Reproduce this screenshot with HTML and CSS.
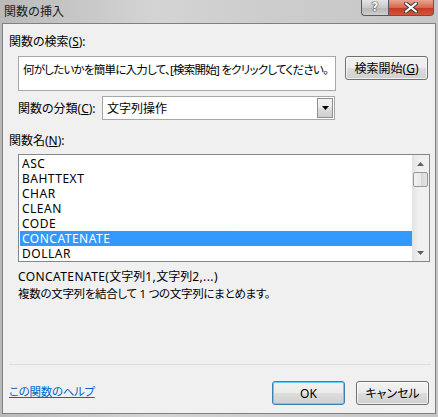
FILE: index.html
```html
<!DOCTYPE html>
<html lang="ja">
<head>
<meta charset="utf-8">
<title>関数の挿入</title>
<link rel="stylesheet" href="styles.css">
</head>
<body>
<div class="window">
  <div class="titlebar">
    <span class="title">関数の挿入</span>
    <div class="caption">
      <div class="cap-btn help">?</div>
      <div class="cap-btn close">
        <svg width="14" height="11" viewBox="0 0 14 11"><path d="M2 1.5 L12 9.5 M12 1.5 L2 9.5" stroke="#3a3a3a" stroke-width="4" stroke-linecap="square"/><path d="M2 1.5 L12 9.5 M12 1.5 L2 9.5" stroke="#fff" stroke-width="2" stroke-linecap="square"/></svg>
      </div>
    </div>
  </div>
  <div class="client">
    <div class="label">関数の検索(<u>S</u>):</div>
    <div class="search-row">
      <div class="search-box">何がしたいかを簡単に入力して、[検索開始] をクリックしてください。</div>
      <div class="btn search-btn">検索開始(<u>G</u>)</div>
    </div>
    <div class="cat-row">
      <span class="cat-label">関数の分類(<u>C</u>):</span>
      <div class="combo">
        <span class="combo-text">文字列操作</span>
        <div class="combo-btn"><svg width="7" height="4" viewBox="0 0 7 4"><path d="M0 0 H7 L3.5 4 Z" fill="#000"/></svg></div>
      </div>
    </div>
    <div class="label name-label">関数名(<u>N</u>):</div>
    <div class="listbox">
      <div class="items">
        <div class="item">ASC</div>
        <div class="item">BAHTTEXT</div>
        <div class="item">CHAR</div>
        <div class="item">CLEAN</div>
        <div class="item">CODE</div>
        <div class="item selected">CONCATENATE</div>
        <div class="item">DOLLAR</div>
      </div>
      <div class="scrollbar">
        <div class="arrow"><svg width="7" height="4" viewBox="0 0 7 4"><path d="M3.5 0 L7 4 H0 Z" fill="#606060"/></svg></div>
        <div class="thumb"></div>
        <div class="track"></div>
        <div class="arrow"><svg width="7" height="4" viewBox="0 0 7 4"><path d="M0 0 H7 L3.5 4 Z" fill="#606060"/></svg></div>
      </div>
    </div>
    <div class="syntax">CONCATENATE(<span class="cjk">文字列</span>1,<span class="cjk">文字列</span>2,...)</div>
    <div class="desc">複数の文字列を結合して 1 つの文字列にまとめます。</div>
    <div class="spacer"></div>
    <div class="separator"></div>
    <div class="footer">
      <a class="help-link" href="#">この関数のヘルプ</a>
      <div class="buttons">
        <div class="btn ok">OK</div>
        <div class="btn">キャンセル</div>
      </div>
    </div>
  </div>
</div>
</body>
</html>
```
FILE: styles.css
```css
html, body {
  margin: 0;
  padding: 0;
}
body {
  width: 438px;
  height: 417px;
  overflow: hidden;
  font-family: "Noto Sans", "Noto Sans CJK JP", sans-serif;
  font-feature-settings: "palt";
  font-size: 12px;
  color: #000;
}
.window {
  width: 438px;
  height: 417px;
  box-sizing: border-box;
  display: flex;
  flex-direction: column;
  padding: 0 2px 3px 2px;
  background: linear-gradient(to right, #b9b9b9 0%, #d4d4d4 35%, #cdcdcd 60%, #c6c6c6 100%);
}
.titlebar {
  height: 23px;
  flex: none;
  display: flex;
  align-items: flex-start;
}
.title {
  margin-left: 2px;
  margin-top: 3px;
  line-height: 17px;
  font-size: 12px;
  color: #1a1a1a;
  font-feature-settings: normal;
}
.caption {
  margin-left: auto;
  margin-right: 2px;
  display: flex;
  height: 16px;
}
.cap-btn {
  height: 15px;
  border: 1px solid #595959;
  border-top: none;
  display: flex;
  align-items: center;
  justify-content: center;
  box-sizing: content-box;
}
.help {
  width: 26px;
  border-radius: 0 0 0 4px;
  border-right: none;
  background: linear-gradient(#e4e4e4, #c9c9c9 50%, #b6b6b6 51%, #cfcfcf);
  font-family: "DejaVu Sans", sans-serif;
  font-weight: bold;
  font-size: 12px;
  color: #fff;
  text-shadow: 0 0 1px #333, 0 0 1px #333, 0 0 1px #333;
  line-height: 15px;
}
.close {
  width: 44px;
  border-radius: 0 0 4px 0;
  background: linear-gradient(#e8a593, #d5694f 50%, #c4391f 51%, #d2553a);
}
.client {
  flex: 1;
  background: #f0f0f0;
  border: 1px solid #808080;
  display: flex;
  flex-direction: column;
  padding: 10px 4px 8px 6px;
}
.label {
  line-height: 15px;
  height: 15px;
}
.search-row {
  display: flex;
  align-items: flex-start;
  margin-top: 7px;
  margin-left: 9px;
}
.search-box {
  background: #fff;
  border: 1px solid #a7a7a7;
  padding: 4px 0 0 4px;
  box-sizing: border-box;
  width: 318px;
  height: 35px;
  line-height: 17px;
  white-space: nowrap;
  overflow: hidden;
  font-size: 11.5px;
  letter-spacing: -0.75px;
}
.btn {
  width: 73px;
  height: 23px;
  box-sizing: border-box;
  border: 1px solid #707070;
  border-radius: 3px;
  background: linear-gradient(#f2f2f2, #ebebeb 50%, #dddddd 51%, #cfcfcf);
  box-shadow: inset 0 0 0 1px rgba(255,255,255,0.7);
  display: flex;
  align-items: center;
  justify-content: center;
  line-height: 15px;
}
.search-btn {
  width: 83px;
  height: 24px;
  margin-left: 9px;
}
.cat-row {
  display: flex;
  align-items: center;
  margin-top: 5px;
  margin-left: 9px;
  height: 24px;
}
.cat-label {
  width: 84px;
  white-space: nowrap;
}
.combo {
  width: 233px;
  height: 24px;
  box-sizing: border-box;
  border: 1px solid #a7a7a7;
  background: #fff;
  display: flex;
  align-items: center;
}
.combo-text {
  flex: 1;
  padding-left: 4px;
}
.combo-btn {
  width: 16px;
  height: 20px;
  margin-right: 1px;
  box-sizing: border-box;
  border: 1px solid #8e8f8f;
  background: linear-gradient(#f2f2f2, #ebebeb 50%, #dddddd 51%, #cfcfcf);
  display: flex;
  align-items: center;
  justify-content: center;
}
.name-label {
  margin-top: 13px;
}
.listbox {
  margin-top: 6px;
  margin-left: 9px;
  width: 412px;
  height: 108px;
  box-sizing: border-box;
  border: 1px solid #828790;
  background: #fff;
  display: flex;
  padding: 1px 0 1px 1px;
}
.items {
  flex: 1;
  display: flex;
  flex-direction: column;
}
.item {
  height: 15px;
  line-height: 15px;
  padding-left: 2px;
  box-sizing: border-box;
  letter-spacing: 0.5px;
}
.item.selected {
  background: #3399ff;
  color: #fff;
  outline: 1px dotted #c87a2a;
  outline-offset: -1px;
}
.scrollbar {
  width: 17px;
  margin-top: -1px;
  margin-bottom: -1px;
  background: linear-gradient(to right, #e3e3e3, #f0f0f0 40%, #f0f0f0);
  display: flex;
  flex-direction: column;
  align-items: center;
}
.arrow {
  height: 17px;
  width: 17px;
  display: flex;
  align-items: center;
  justify-content: center;
}
.thumb {
  width: 15px;
  height: 15px;
  box-sizing: border-box;
  border: 1px solid #979797;
  border-radius: 2px;
  background: linear-gradient(to right, #f3f3f3, #e8e8e8 50%, #d6d6d6 51%, #e3e3e3);
}
.track {
  flex: 1;
}
.syntax {
  margin-top: 6px;
  margin-left: 9px;
  line-height: 17px;
  letter-spacing: 0.4px;
}
.syntax .cjk {
  letter-spacing: 0;
}
.desc {
  margin-left: 9px;
  line-height: 17px;
  font-size: 11.5px;
  letter-spacing: -0.3px;
}
.spacer {
  flex: 1;
}
.separator {
  height: 1px;
  background: #d5dfe5;
}
.footer {
  display: flex;
  align-items: center;
  margin-top: 16px;
  height: 24px;
}
.help-link {
  color: #0066cc;
  text-decoration: underline;
  line-height: 15px;
  margin-top: -4px;
  font-size: 11.5px;
  letter-spacing: -0.3px;
}
.buttons {
  margin-left: auto;
  margin-right: 2px;
  display: flex;
  gap: 11px;
}
.buttons .btn {
  height: 24px;
}
.btn.ok {
  border-color: #3c7fb1;
  box-shadow: inset 0 0 0 1px #5fd0fb;
}
u {
  text-decoration: underline;
  text-underline-offset: 1px;
}
```
